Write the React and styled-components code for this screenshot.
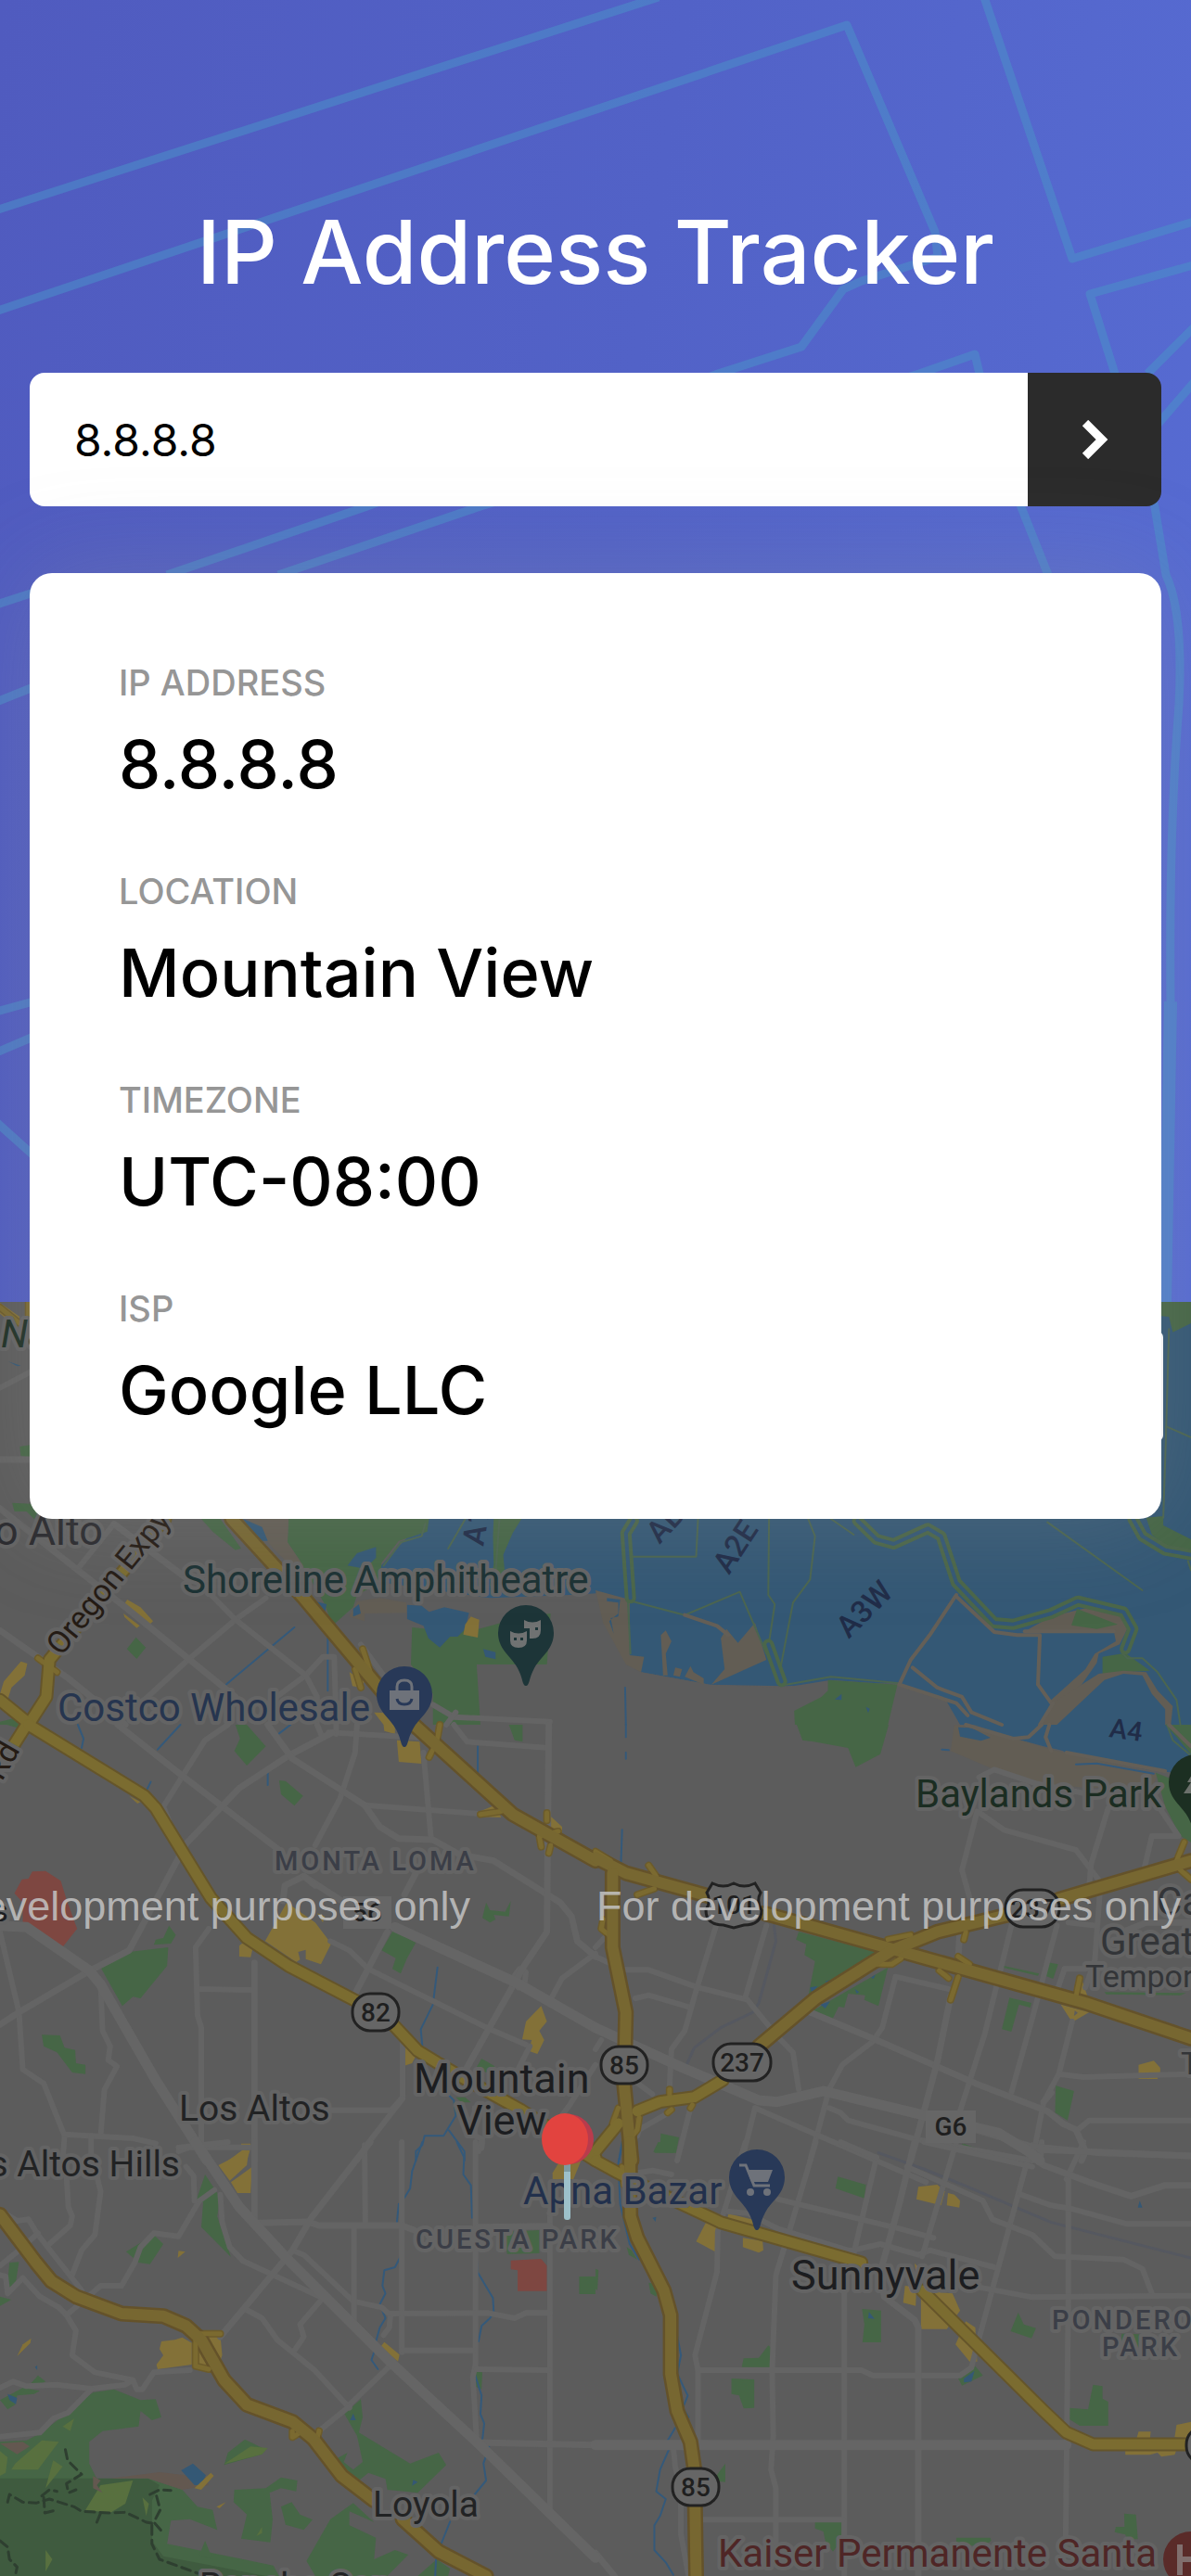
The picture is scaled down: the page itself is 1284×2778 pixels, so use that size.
import React, { useState } from "react";
import styled, { createGlobalStyle } from "styled-components";

const GlobalStyle = createGlobalStyle`
  *, *::before, *::after { box-sizing: border-box; }
  body {
    margin: 0;
    background: #5c5c5c;
    font-family: Inter, "Liberation Sans", sans-serif;
  }
`;

const Page = styled.div`
  min-height: 100vh;
  display: flex;
  flex-direction: column;
  overflow-x: hidden;
`;

const Header = styled.header`
  position: relative;
  z-index: 1;
  display: flex;
  flex-direction: column;
  padding: 212px 32px 0;
  background: linear-gradient(98deg, #505bbf 0%, #5262c7 50%, #576cd3 100%);
`;

const Pattern = styled.svg`
  position: absolute;
  inset: 0;
  width: 100%;
  height: 100%;
`;

const Title = styled.h1`
  position: relative;
  margin: 0 0 70px;
  color: #fff;
  font-size: 95px;
  font-weight: 500;
  line-height: 120px;
  text-align: center;
`;

const SearchForm = styled.form`
  position: relative;
  display: flex;
  height: 144px;
  margin-bottom: 72px;
  border-radius: 16px;
  overflow: hidden;
`;

const SearchInput = styled.input`
  flex: 1;
  min-width: 0;
  padding: 0 48px;
  border: 0;
  outline: 0;
  background: #fff;
  color: #000;
  font-family: inherit;
  font-size: 48px;
`;

const SearchButton = styled.button`
  display: flex;
  align-items: center;
  justify-content: center;
  width: 144px;
  padding: 0;
  border: 0;
  background: #2b2b2b;
  cursor: pointer;
`;

const Card = styled.dl`
  position: relative;
  display: flex;
  flex-direction: column;
  gap: 72px;
  margin: 0 0 -234px;
  padding: 96px;
  border-radius: 24px;
  background: #fff;
  box-shadow: 0 0 110px rgba(150, 150, 150, 0.25);
`;

const Entry = styled.div`
  display: flex;
  flex-direction: column;
  gap: 22px;
`;

const Label = styled.dt`
  color: #969696;
  font-size: 38px;
  font-weight: 500;
  line-height: 45px;
  text-transform: uppercase;
`;

const Value = styled.dd`
  margin: 0;
  color: #000;
  font-size: 72px;
  font-weight: 500;
  line-height: 86px;
`;

const MapPane = styled.main`
  position: relative;
  flex: 1;
  display: flex;
  min-height: 1374px;
`;

const MapDrawing = styled.svg`
  flex: 1;
  width: 100%;
  height: auto;
  background: #5c5c5c;
  font-family: Roboto, "Liberation Sans", sans-serif;
`;

const FullscreenButton = styled.button`
  position: absolute;
  top: 32px;
  right: 30px;
  width: 120px;
  height: 118px;
  border: 0;
  border-radius: 6px;
  background: #fff;
`;

const Place = styled.text`
  fill: ${(p) => p.$color || "#1c1d20"};
  font-size: ${(p) => p.$size || 42}px;
  font-style: ${(p) => (p.$italic ? "italic" : "normal")};
  stroke: #646464;
  stroke-width: 8px;
  stroke-linejoin: round;
  paint-order: stroke;
`;

const District = styled(Place)`
  fill: #3b3e47;
  font-size: 29px;
  font-weight: 500;
  letter-spacing: 3px;
`;

const PondName = styled.text`
  fill: #202c48;
  font-size: ${(p) => p.$size || 33}px;
  font-weight: 500;
`;

const ShieldText = styled.text`
  fill: #1f1f1f;
  font-size: 28px;
  font-weight: 500;
  text-anchor: middle;
`;

const Watermark = styled.text`
  fill: #c4c4c4;
  fill-opacity: 0.86;
  font-family: "Liberation Sans", Arial, sans-serif;
  font-size: 45px;
`;

const GREEN = "#466646";
const WATER = "#345875";
const SAND = "#625d54";
const SHOP = "#837138";
const RED = "#7e4741";
const FOREST = "#3f5b3f";
const OLIVE = "#58703f";

// The map is drawn in six tiles, each with a local 1568-wide grid.
const tiles = [
  {
    x: 0,
    y: 1390,
    areas: [
      [WATER, "1120,740 1570,740 1570,985 1500,990 1290,1000 1010,950 1000,900"],
      [GREEN, "760,740 1130,740 1125,785 1050,815 1005,885 1000,950 940,990 930,1030 875,1090 855,1020 790,880 757,820"],
      [GREEN, "1300,740 1375,740 1350,790 1325,860 1330,930 1360,990 1290,960 1300,890 1298,800"],
      [SAND, "650,740 760,740 757,820 790,880 800,940 720,840"],
      [WATER, "640,744 690,770 705,815 680,815"],
      [SAND, "940,1010 1000,1000 1070,1015 1070,1048 960,1050 960,1075 920,1060"],
      [WATER, "940,855 990,835 990,870 960,905 915,895"],
      [WATER, "830,1010 860,1020 855,1050 830,1040"],
      [WATER, "930,1035 945,1020 950,1050 930,1060"],
      [GREEN, "1085,1095 1130,1100 1260,1100 1380,1060 1450,1050 1440,1215 1255,1215 1265,1410 1140,1410 1140,1310 1082,1215"],
      [WATER, "1072,1022 1110,1025 1130,1045 1170,1030 1235,1048 1225,1100 1205,1125 1185,1125 1158,1160 1128,1130 1115,1090 1072,1068"],
      [WATER, "1272,1165 1305,1175 1305,1198 1278,1190"],
      [SHOP, "1240,1060 1262,1070 1258,1128 1220,1118 1225,1085"],
      [GREEN, "530,744 580,744 635,840 620,845 560,785"],
      [GREEN, "52,510 78,505 78,545 55,540"],
      [GREEN, "32,692 80,695 110,715 90,745 70,720 38,720"],
      [GREEN, "358,1127 384,1160 360,1197 334,1165"],
      [SHOP, "335,1005 370,1030 403,1075 390,1090 340,1042 322,1030"],
      [SHOP, "325,1050 368,1090 360,1097 328,1062"],
      [SHOP, "55,1205 72,1212 65,1250 30,1290 20,1330 0,1310 10,1270"],
      [SHOP, "30,1340 80,1380 80,1410 50,1410"],
      [SHOP, "0,45 52,90 45,125 0,80"],
      [WATER, "22,235 55,248 45,250"],
      [GREEN, "35,1390 50,1410 0,1410 0,1400"],
      [SHOP, "955,1155 975,1230 940,1220"],
      [SHOP, "920,1240 960,1270 950,1290 928,1285"],
      [SHOP, "985,1370 1020,1372 1035,1410 1010,1410"],
    ],
    thin: [
      "0,320 78,270", "205,905 300,760", "620,1070 700,1000", "495,1200 620,1070",
      "380,1330 495,1200", "690,1355 805,1250 850,1190 880,1190 885,1390", "540,970 620,1070 805,1250 835,1320 835,1400",
      "950,1150 1010,1250", "1140,1345 1195,1385 1448,1400", "1175,1410 1200,1370",
    ],
    streets: ["0,552 78,552", "0,710 205,910 330,1030 620,1320", "300,760 490,935", "0,1105 180,1260 330,1410"],
    streams: ["595,1280 775,1095", "863,1130 863,1300"],
    creeks: ["1120,760 1110,800 1055,820 1010,895", "1225,745 1180,840", "1315,745 1305,920 1320,970"],
    majors: ["435,744 395,800 360,860 130,1200 122,1320 80,1400", "0,1330 80,1410"],
    freeways: ["610,744 800,1000 1080,1410"],
    ramps: ["0,60 50,110", "75,40 75,90", "100,1195 150,1240", "955,1165 975,1240", "935,1230 950,1290"],
  },
  {
    x: 642,
    y: 1390,
    areas: [
      [WATER, "0,740 0,0 1570,0 1570,1410 950,1410 920,1330 795,1275 495,1285 300,1280 120,1240 60,1180 0,975"],
      [GREEN, "1490,40 1570,40 1570,110 1520,140 1510,90 1490,88"],
      ["#5c5c5c", "0,980 80,1210 120,1240 300,1280 495,1290 620,1265 795,1280 925,1335 960,1410 0,1410"],
      [SAND, "0,975 90,1005 90,1185 128,1190 120,1240 80,1215 20,1080"],
      [SAND, "330,1130 345,1100 375,1145 420,1080 450,1200 305,1280 340,1230"],
      [WATER, "30,1000 65,1005 60,1060 40,1065 48,1115 36,1075 60,1050 60,1015 30,1010"],
      [SAND, "185,1105 200,1140 185,1180 190,1250 178,1250 172,1120"],
      [SAND, "210,1225 228,1230 222,1255 205,1250"],
      [SAND, "250,1220 258,1240 285,1260 285,1280 235,1255"],
      [GREEN, "612,1265 795,1280 770,1410 525,1410 523,1365 595,1320 612,1300"],
      [WATER, "630,1328 648,1310 648,1330"],
      [WATER, "712,1352 722,1358 718,1372"],
      [SAND, "1130,1108 1200,1060 1300,1030 1390,1055 1400,1100 1380,1150 1325,1180 1320,1210 1280,1280 1210,1350 1195,1335 1290,1230 1315,1180 1370,1140 1365,1108"],
      [GREEN, "1268,1035 1375,1085 1320,1100 1253,1088"],
      [GREEN, "1335,1190 1395,1178 1460,1235 1390,1240 1335,1245"],
      [SAND, "1325,1245 1390,1235 1450,1240 1480,1300 1520,1350 1515,1410 1500,1410 1500,1360 1465,1310 1440,1250 1390,1245 1340,1265 1215,1410 1170,1410 1210,1335"],
      [GREEN, "1450,740 1495,735 1495,765 1568,810 1568,850 1500,830 1465,795"],
    ],
    thin: [],
    streets: [],
    streams: ["78,1290 80,1410"],
    creeks: [
      "1510,130 1503,440 1495,740", "1503,445 1568,480", "100,750 70,790 85,1000 92,1180", "95,866 265,866 270,744",
      "457,744 455,990 472,1020 455,1160 485,1240", "560,744 578,800 565,940 520,1015 485,1240", "1190,755 1440,975",
      "620,744 680,795", "100,1012 235,1055 380,980 450,1180", "495,1282 620,1255 795,1275",
      "1385,1175 1400,1195 1440,1195 1480,1240 1530,1330 1540,1410", "1560,880 1568,910",
    ],
    banks: [
      "690,750 740,810 785,825 875,775 910,800 950,950 1050,1080 1100,1085 1200,1050 1270,1010 1390,1045 1415,1100 1395,1165",
      "1415,744 1440,800 1500,845 1568,860", "100,750 80,790 92,1000", "455,1150 490,1270",
    ],
    dikes: [
      "235,1055 320,1090 350,1120", "950,990 880,1120 830,1200 800,1280", "950,995 1050,1110 1110,1120 1170,1120 1165,1280 1200,1340",
      "1130,1108 1365,1108", "835,1225 900,1290 965,1320 990,1370 1070,1410", "800,1280 950,1340 980,1380",
      "1205,1340 1185,1380 1170,1410",
    ],
    majors: [],
    freeways: [],
    ramps: [],
  },
  {
    x: 0,
    y: 1860,
    areas: [
      [GREEN, "620,0 650,0 700,70 650,132 617,85 632,45"],
      [GREEN, "735,180 752,182 798,230 775,262 740,225"],
      [GREEN, "1340,0 1376,0 1376,55 1355,50"],
      [RED, "85,475 120,473 160,505 175,565 203,660 162,724 60,640 60,575 38,545 58,500 75,498"],
      [GREEN, "265,785 340,735 443,720 440,780 370,885 350,880 322,910"],
      [GREEN, "445,650 463,680 450,708 405,712 410,695 430,690"],
      [SHOP, "755,575 830,640 872,708 845,775 805,758 805,728 785,735 790,760 780,768 698,700"],
      [SHOP, "835,610 855,620 850,640"],
      [SHOP, "640,705 668,710 660,752 630,750 630,715"],
      [GREEN, "1035,665 1095,705 1072,755 1055,805 1033,790 1042,755 1005,730"],
      [GREEN, "1280,575 1290,600 1330,605 1345,570 1340,620 1300,615 1305,630 1290,640 1270,625"],
      [SHOP, "1425,910 1440,960 1420,990 1433,1020 1415,1065 1392,1055 1400,1020 1375,1018 1385,960"],
      [GREEN, "110,1003 158,1005 170,1045 198,1052 200,1095 225,1100 225,1130 190,1125 150,1060 115,1040"],
      [SHOP, "1068,1040 1100,1060 1085,1095 1065,1103"],
      [GREEN, "1268,1080 1303,1105 1280,1125 1255,1108"],
      [GREEN, "1200,1205 1225,1205 1240,1222 1215,1222"],
      [SHOP, "1045,50 1105,55 1110,126 1050,120"],
      [SHOP, "1010,0 1040,0 1040,30 1012,20"],
      [SHOP, "340,230 370,250 362,255"],
      [SHOP, "600,1410 640,1375 658,1378 650,1410"],
      [SHOP, "1440,285 1480,330 1480,360 1430,330"],
      [SHOP, "1265,280 1300,262 1320,300 1262,298"],
      [GREEN, "18,0 55,0 45,10"],
    ],
    thin: [
      "600,0 540,50 430,265 445,310", "865,25 1110,42", "940,0 935,90 895,240 830,390", "960,260 1262,288",
      "1115,90 1135,370", "845,30 835,0", "885,0 885,30", "1195,0 1230,55 1445,75",
      "525,855 665,858", "870,1247 1030,1247 1060,1205 1060,1000", "265,840 270,990 290,1040 285,1085 308,1105 275,1180 265,1330",
      "0,670 50,930 60,1115 115,1160 170,1330 165,1410", "170,1325 350,1338 410,1355", "240,1330 240,1410",
      "470,1380 500,1367 665,1367", "1060,1210 965,1360 940,1410", "1250,1240 1250,1330 1270,1340 1260,1380",
      "1568,740 1480,820 1445,900", "1568,1100 1500,1230 1470,1280", "550,660 515,720 520,940 530,980 530,1380",
      "870,700 920,730 970,790 1290,985 1385,1035", "1365,850 1350,820 1368,790 1385,800 1380,850", "1395,1040 1350,1150",
    ],
    streets: [
      "310,0 480,165 740,410", "0,970 50,930 230,800 340,730 490,385 630,205 760,100 875,25", "705,0 770,110 960,260 1000,330 1050,368 1140,372 1210,420 1300,440 1475,575 1505,620 1520,700 1568,750",
      "1445,0 1440,670 1380,780 1220,1130", "1095,480 1065,550", "1020,670 935,870", "745,570 750,520 800,490 900,570",
      "670,770 670,1410", "800,490 830,520",
    ],
    avenues: ["0,650 70,655 235,795 265,840 410,1150 545,1410", "1040,655 1360,835 1568,980"],
    streams: [
      "205,0 220,45 215,75", "475,0 415,80", "397,185 385,215", "765,0 735,28", "1152,785 1140,905 1108,985 1112,1040",
      "1258,70 1258,155", "1155,1165 1195,1215 1200,1265 1168,1330 1118,1330 1112,1360 1095,1380 1095,1410", "1182,1312 1223,1380 1223,1410", "705,140 705,195",
    ],
    creeks: [],
    majors: ["70,0 35,68", "75,0 380,230 410,270 555,560 650,690 760,780 940,895", "1035,970 1100,1055 1160,1100", "1160,1100 1230,1150 1370,1245 1568,1400"],
    freeways: ["1090,0 1350,290 1568,440"],
    ramps: ["1158,0 1150,55 1130,105", "1440,285 1440,310", "1470,345 1420,360 1425,395", "1265,290 1320,280", "1445,415 1450,390"],
  },
  {
    x: 642,
    y: 1860,
    areas: [
      [WATER, "955,5 1010,0 1568,0 1568,160 1450,145 1180,70 1090,40 1010,20 1040,45 1020,50 960,35"],
      [SAND, "945,0 1010,10 1200,80 1480,160 1470,195 1300,205 1160,190 1060,150 935,85"],
      [WATER, "1180,0 1568,0 1568,165 1480,148 1240,90 1190,60"],
      [WATER, "955,8 990,10 1040,42 1015,52 960,38"],
      [GREEN, "1475,155 1568,200 1568,380 1540,360 1500,265"],
      [GREEN, "1500,0 1568,0 1568,95 1530,40"],
      [GREEN, "530,0 772,0 750,95 685,137 665,75 575,55 545,50"],
      [GREEN, "535,670 740,735 560,880 578,765 550,745 555,710 528,695"],
      [GREEN, "770,785 745,910 708,890 710,875 665,870 655,915 640,912 625,950 565,930"],
      [WATER, "565,850 585,845 570,870"],
      [WATER, "592,905 618,895 605,918"],
      [WATER, "605,830 620,825 612,842"],
      [WATER, "725,818 738,808 732,822"],
      [WATER, "683,855 694,865 688,870"],
      [GREEN, "1188,768 1218,775 1205,822 1180,810"],
      [GREEN, "1075,780 1168,805 1165,812 1072,785"],
      [GREEN, "1090,883 1148,900 1145,915 1115,905 1095,993 1070,985"],
      [SHOP, "1430,1100 1470,1087 1487,1110 1487,1130 1430,1130"],
      [SHOP, "1430,1140 1480,1140 1480,1146 1430,1146"],
      [GREEN, "1212,1168 1260,1185 1243,1280 1210,1255"],
      [GREEN, "172,1322 220,1335 212,1385 155,1385 170,1365"],
      [GREEN, "970,1355 1000,1370 970,1372"],
      [GREEN, "1340,865 1555,868 1540,875 1345,872"],
      [SHOP, "1278,815 1300,895 1258,880"],
      [SHOP, "1225,905 1300,930 1255,962"],
      ["#5c5c5c", "1262,925 1270,932 1260,942"],
    ],
    thin: [
      "1010,170 1050,145 1160,190 1300,225", "985,560 965,470 1005,280 1075,340 1265,405 1330,510", "1350,270 1305,450 1300,520",
      "1480,260 1535,360 1465,360 1445,465", "1330,510 1315,760 1290,850", "1245,640 1320,650", "105,885 140,875 250,915",
      "75,793 140,793 270,850 400,890 480,1010 520,1060 535,1180", "320,640 265,860 235,990 200,1050 195,1170",
      "450,650 395,880", "930,855 790,815 755,980 730,1025 650,1100 615,1180", "1095,650 1025,1000 960,1250", "1215,650 1150,950 1095,1190",
      "1255,960 1220,1130 1180,1220 1150,1410", "1220,1130 1285,1140 1568,1130", "1270,1310 1300,1280 1568,1280",
      "615,1180 600,1250 565,1410", "420,1240 385,1410", "250,1240 215,1410", "110,1330 115,1310 200,1250", "1235,790 1210,880", "1235,790 1290,790",
      "0,720 30,680", "0,750 75,793", "0,1050 15,1020", "100,1150 150,1195",
      "615,1240 645,1255 665,1280 840,1340 1150,1410", "420,1240 870,1480",
    ],
    streets: ["565,930 740,1020 1000,1160 1190,1250 1230,1290 1265,1310 1290,1380 1280,1410", "935,880 900,1090 830,1410", "960,650 955,760", "1390,670 1450,640 1568,640", "1000,1310 1150,1365 1330,1385 1568,1395", "1180,1220 1200,1190"],
    avenues: ["0,980 230,1110 430,1215 480,1220 600,1185 870,1265 1060,1320 1140,1380 1170,1410"],
    streams: ["80,0 80,40", "80,90 80,110", "70,340 66,480", "912,80 930,82", "1265,128 1320,125 1470,158", "72,1350 62,1410"],
    creeks: ["1505,0 1520,50 1568,100"],
    dikes: ["975,0 1100,45 1140,40 1175,0", "1195,0 1185,40 1200,85", "1240,90 1500,150", "1510,0 1568,70"],
    rails: ["470,650 475,700 430,900 415,930 330,980 260,1045 240,1100"],
    majors: ["110,1250 170,1220 260,1205 335,1150", "0,1380 60,1290"],
    freeways: [
      "0,430 80,480 300,555", "445,610 780,725 1290,900 1568,1015", "45,480 45,720 80,930 78,1040", "75,1160 95,1410",
      "430,1040 580,885 780,730 900,670 1085,615", "1220,565 1568,440",
    ],
    ramps: [
      "140,455 160,490", "110,550 155,530", "20,630 15,660 35,680", "0,410 40,440", "975,670 970,695", "955,750 985,775",
      "905,795 930,820", "955,815 935,890", "770,695 830,680", "740,775 780,775 805,755", "1550,380 1530,440", "1540,470 1568,500",
      "1275,820 1265,880", "60,1240 45,1290", "115,1270 110,1310 85,1350", "195,1180 195,1210", "200,1245 190,1255", "255,1230 250,1240",
    ],
  },
  {
    x: 0,
    y: 2310,
    areas: [
      [SHOP, "655,25 650,75 605,125 575,75"],
      [SHOP, "664,80 660,165 625,165 608,130"],
      [SHOP, "635,5 660,5 660,12 635,15"],
      [GREEN, "540,105 580,180 572,240 608,372 530,275 535,195 515,195"],
      [GREEN, "405,300 430,330 395,395 365,390 332,355"],
      [GREEN, "25,390 50,388 42,450 18,480"],
      [GREEN, "0,500 30,510 0,530"],
      [SHOP, "470,352 488,355 468,375"],
      [SHOP, "425,645 460,640 480,632 505,650 505,720 415,735 412,720 430,690 420,670"],
      [SHOP, "82,635 80,650 45,693 60,655"],
      [GREEN, "110,940 245,810 300,800 370,835 410,832 425,890 400,900 370,870 365,920 270,935 235,970 235,1040 255,1090 390,1088 480,1125 520,1180 560,1190 572,1255 500,1220 450,1225 440,1300 720,1370 735,1404 0,1404 0,970 70,965"],
      [FOREST, "0,1088 390,1088 420,1110 400,1160 400,1290 430,1340 700,1404 0,1404"],
      [OLIVE, "40,1040 110,965 155,970 100,1060 30,1060"],
      [OLIVE, "140,1030 165,1050 120,1120"],
      [OLIVE, "225,1190 265,1110 350,1095 330,1170 290,1200"],
      [OLIVE, "0,1000 20,1020 15,1070 0,1080"],
      [OLIVE, "375,1150 392,1170 385,1210"],
      [OLIVE, "120,1320 138,1350 120,1390"],
      [OLIVE, "165,920 195,895 185,935"],
      [OLIVE, "965,1290 980,1340 960,1340"],
      ["#635850", "0,975 60,970 78,985 45,1010"],
      ["#635850", "245,1080 265,1095 255,1110 270,1135 245,1120"],
      ["#635850", "290,1088 420,1068 540,1085 550,1110 480,1125 390,1088"],
      [GREEN, "0,835 60,795 105,805 90,815 45,820 40,850 20,865"],
      [GREEN, "100,755 120,775 100,790 82,780"],
      [WATER, "20,815 45,828 42,848 25,835"],
      [WATER, "92,728 98,722 98,738"],
      [GREEN, "645,962 700,995 690,1010 590,1045 600,1005"],
      [OLIVE, "660,985 705,990 690,1010 590,1042"],
      [WATER, "508,1040 542,1078 530,1110 512,1110 477,1062"],
      [SHOP, "555,1070 563,1080 530,1125 512,1120"],
      [GREEN, "740,1085 783,1095 780,1130 740,1120 710,1135 718,1220 712,1295 635,1283 650,1205 615,1165 617,1125 700,1120"],
      [GREEN, "768,1165 790,1205 823,1222 800,1255 752,1238 740,1180"],
      [GREEN, "930,1168 985,1230 920,1195 920,1240 990,1280 985,1350 1040,1320 1075,1335 1020,1404 830,1404 807,1355 870,1220"],
      [GREEN, "950,832 955,890 945,940 1080,1040 1155,1005 1175,1045 1100,1135 1020,1125 1015,1090 970,1070 940,1100 890,1040 885,1025 915,1005 905,1035 930,1060 955,1035 940,950 907,880"],
      [WATER, "930,878 937,900 922,900"],
      [WATER, "1088,1093 1100,1100 1085,1112"],
      [GREEN, "1250,740 1270,745 1268,800 1250,790"],
      [GREEN, "1330,290 1420,285 1420,360 1335,362"],
      [RED, "1345,383 1425,378 1440,400 1440,482 1363,482 1363,415 1345,412"],
      [GREEN, "1525,435 1568,435 1568,492 1525,492"],
      [SHOP, "1012,647 1052,688 1048,710 1002,662"],
      [SHOP, "1455,100 1475,60 1530,60 1510,120 1455,122"],
      [SHOP, "520,610 580,625 585,690 570,740 510,735 505,650"],
      [GREEN, "1150,1350 1185,1380 1180,1404 1100,1404"],
      [SHOP, "570,1180 595,1165 578,1185"],
      [OLIVE, "675,1275 690,1245 690,1265"],
      [GREEN, "540,1290 560,1350 525,1335"],
    ],
    thin: [
      "175,110 180,210 190,240 185,270 130,330", "255,110 265,160 250,300 215,350 190,430", "0,220 45,255 75,250 100,300 215,480",
      "100,295 60,340 0,400", "60,440 20,490 15,435 0,430", "60,440 105,500 155,535 175,560 200,610 190,690 250,745 350,770",
      "175,560 265,465 320,465 355,390 370,340 405,295 470,305 525,190 565,155", "490,80 510,110 512,190", "600,0 470,18",
      "0,795 35,775 70,790 150,785 240,798 330,785 350,770 360,800 375,800 405,745 500,738", "240,800 180,875 140,895 105,940 0,953",
      "580,170 585,260 605,340 640,385 850,505 790,590 800,630 775,675", "770,350 800,365 930,515 1005,535 1028,560 1025,600 1010,625",
      "932,270 932,580", "1058,0 1058,680", "960,10 962,265", "1252,0 1252,720 1245,760 1255,960", "1448,230 1448,1190",
      "1028,555 1285,553 1355,570 1385,553 1448,553", "1058,674 1250,674", "1255,735 1445,738", "645,540 690,570 730,640 830,740 920,860",
      "920,850 1030,720", "840,935 920,855", "1270,0 1268,20",
    ],
    streets: ["670,0 670,265", "675,262 810,258 840,270 1058,270 1090,285", "1258,275 1448,272", "975,0 820,245 770,350 580,630", "1255,972 1568,980", "1448,230 1460,200"],
    avenues: ["515,0 630,210 750,370 1035,720 1255,970 1568,1345"],
    streams: [
      "1112,0 1085,95 1080,150 1065,180", "1050,200 1045,260", "1053,280 1053,275", "1203,0 1222,50 1220,105 1240,140 1243,245",
      "1055,370 1040,405 1012,415 1007,465 1015,490 1000,525 1015,570 1000,600 990,645", "985,680 978,705 995,735",
      "1255,365 1257,420 1298,505 1300,550 1290,570 1268,595 1260,645", "1250,750 1268,820 1265,880 1275,910 1270,965", "1288,985 1273,1040 1280,1095 1250,1140",
      "1185,1228 1160,1305 1148,1350 1146,1404",
    ],
    creeks: [],
    trails: [
      "172,995 178,1030 215,1075 175,1105 180,1135 200,1125", "20,1165 25,1140 60,1165 95,1168 130,1155 195,1180 215,1195 290,1200 330,1198 385,1230 410,1235",
      "395,1140 420,1125 450,1127", "412,1145 422,1190 405,1230 430,1265", "400,1240 400,1300 420,1350 520,1395", "110,1145 130,1125 150,1130",
      "0,1290 20,1310 25,1350 45,1375 40,1404", "255,1230 265,1200", "115,1150 118,1200 150,1190",
    ],
    majors: ["1490,0 1568,60"],
    freeways: ["0,235 95,390 135,450 200,500 320,555 430,563 490,595 530,640 590,770 650,850 770,905 825,960 900,1080 985,1160", "1060,1220 1155,1325 1280,1404"],
    ramps: ["770,935 770,955 790,940", "840,935 835,960", "515,640 515,725 550,735", "580,620 520,620"],
  },
  {
    x: 642,
    y: 2310,
    areas: [
      [GREEN, "638,112 712,138 708,182 632,150"],
      [SHOP, "850,145 900,138 920,160 910,205 845,185"],
      [SHOP, "928,165 945,170 960,190 958,212 925,205"],
      [SHOP, "890,125 925,135 925,148"],
      [SHOP, "350,232 410,250 440,280 430,300 345,260"],
      [SHOP, "290,262 325,275 315,355 265,322"],
      [SHOP, "388,310 440,320 442,350 430,358 388,340"],
      [GREEN, "165,0 215,0 205,35 152,32"],
      [GREEN, "965,5 1000,18 968,18"],
      [GREEN, "0,410 8,415 5,480 0,475"],
      [GREEN, "140,455 165,460 160,500 145,490"],
      [GREEN, "702,540 752,545 752,648 703,648 708,590"],
      [WATER, "720,550 735,572 718,570"],
      [SHOP, "815,465 845,470 843,530 810,520"],
      [SHOP, "840,392 855,410 845,430"],
      [SHOP, "857,480 940,490 960,545 925,605 857,605"],
      [SHOP, "975,580 1000,600 1005,710 985,710 948,655"],
      [GREEN, "1113,552 1128,590 1160,602 1148,635 1093,612"],
      [GREEN, "455,658 462,665 462,728 385,728 390,700 430,698"],
      [GREEN, "358,765 418,768 418,860 390,862 378,820 358,815"],
      [GREEN, "955,765 1000,725 1020,755 965,788"],
      [WATER, "970,765 998,740 990,775 970,778"],
      [GREEN, "1310,785 1335,790 1335,830 1350,840 1350,918 1275,918 1245,895 1247,860 1297,865"],
      [SHOP, "1430,937 1462,937 1460,960 1425,958"],
      [SHOP, "1395,995 1530,995 1525,1012 1490,1018 1480,1005 1460,1012 1395,1012"],
      [SHOP, "1530,915 1568,905 1568,958 1525,955"],
      [GREEN, "578,1230 648,1230 648,1290 625,1325 605,1290 600,1260 578,1250"],
      [GREEN, "318,1080 342,1040 342,1100 325,1098"],
      [GREEN, "950,1280 1040,1280 1042,1290 1020,1310 950,1300"],
      [GREEN, "1392,1202 1423,1205 1428,1285 1400,1285 1395,1270 1367,1262 1370,1245 1393,1245"],
      [GREEN, "1385,620 1432,622 1430,665 1385,665"],
      [WATER, "1433,190 1440,212 1428,212"],
      [WATER, "150,245 160,242 158,258"],
      [GREEN, "82,340 95,350 110,380 88,365"],
    ],
    thin: [
      "395,0 370,100 322,290 320,420 262,690 270,740 270,970", "580,0 510,290 475,430 465,740 468,950 462,1060 475,1120 475,1300",
      "740,50 680,360", "480,185 800,280 890,310", "110,100 150,92 200,105", "350,225 400,230 480,280 670,352 750,330 850,365 880,350 1050,405",
      "270,738 700,738 730,755 960,755 990,730 1000,680 1135,70 1150,10", "655,480 655,1404", "280,1222 650,1222", "1240,120 1285,0", "1245,120 1245,500 1238,1280",
      "950,0 860,370", "645,0 740,50", "820,80 1020,190 1045,250 1150,300 1210,370 1390,380 1440,410 1465,490", "1010,470 1150,502 1568,497", "1120,170 1200,205 1250,215 1400,265 1568,265",
      "1175,0 1172,60", "865,0 1150,80", "205,990 210,1050 225,1130 225,1270 245,1404",
    ],
    streets: ["840,0 800,200 750,420 760,500 840,575 850,600 850,1404", "1100,0 1180,75 1300,130 1410,175 1500,140 1568,140", "0,1330 50,1404", "1170,25 1568,45"],
    avenues: ["0,980 1240,980"],
    streams: ["70,0 60,70 65,200 90,330 115,380", "215,625 225,690 215,750 243,820 230,860 245,890", "210,925 188,970", "195,990 170,1060 160,1130 185,1155 170,1210 155,1240 155,1320 185,1360 205,1400"],
    creeks: [],
    rails: ["745,35 870,90 980,145 1200,260 1568,375"],
    majors: ["0,60 60,100 140,150 330,260 700,390", "860,480 1180,870 1240,940 1310,978 1568,978"],
    freeways: ["90,0 92,240 110,310 180,480 198,560 198,750 215,870 250,970 260,1055", "262,1175 265,1404"],
    ramps: ["20,0 0,50", "70,80 75,140 95,155"],
  },
];

const layers = [
  { key: "streams", stroke: "#34597a", width: 2 },
  { key: "creeks", stroke: "#4b6550", width: 2 },
  { key: "banks", stroke: "#4b6649", width: 12 },
  { key: "banks", stroke: WATER, width: 4 },
  { key: "dikes", stroke: "#645f57", width: 4 },
  { key: "rails", stroke: "#555860", width: 3 },
  { key: "thin", stroke: "#646464", width: 6 },
  { key: "streets", stroke: "#646464", width: 7 },
  { key: "avenues", stroke: "#656565", width: 11 },
  { key: "ramps", stroke: "#6c5b2b", width: 8 },
  { key: "majors", stroke: "#65552a", width: 15 },
  { key: "freeways", stroke: "#64522a", width: 17 },
  { key: "ramps", stroke: "#7b6a30", width: 5 },
  { key: "majors", stroke: "#7b6c30", width: 11 },
  { key: "freeways", stroke: "#776731", width: 12 },
  { key: "trails", stroke: "#2e3f30", width: 3, dash: "10 6" },
];

const tileTransform = (tile) => `translate(${tile.x} ${tile.y}) scale(0.40944 0.33333)`;

function Terrain() {
  return (
    <g fill="none" strokeLinejoin="round" strokeLinecap="round">
      {tiles.map((tile) => (
        <g key={`${tile.x}-${tile.y}`} transform={tileTransform(tile)}>
          {tile.areas.map(([fill, points]) => (
            <polygon key={points} fill={fill} points={points} />
          ))}
        </g>
      ))}
      {layers.map((layer, i) => (
        <g key={i} stroke={layer.stroke} strokeWidth={layer.width} strokeDasharray={layer.dash}>
          {tiles.map((tile) => (
            <g key={`${tile.x}-${tile.y}`} transform={tileTransform(tile)}>
              {(tile[layer.key] || []).map((points) => (
                <polyline key={points} points={points} vectorEffect="non-scaling-stroke" />
              ))}
            </g>
          ))}
        </g>
      ))}
    </g>
  );
}

function Shield({ x, y, width = 50, children }) {
  return (
    <g>
      <rect x={x - width / 2} y={y - 20} width={width} height={40} rx={19} fill="#666" stroke="#222" strokeWidth={3} />
      <ShieldText x={x} y={y + 10}>{children}</ShieldText>
    </g>
  );
}

function PoiPin({ x, y, color, children }) {
  return (
    <g transform={`translate(${x} ${y})`}>
      <path d="M0 57C-4 57-3 49-9 38C-16 25-30 18-30 0A30 30 0 0 1 30 0C30 18 16 25 9 38C3 49 4 57 0 57Z" fill={color} />
      {children}
    </g>
  );
}

function AreaMap() {
  return (
    <MapDrawing viewBox="0 1404 1284 1374" preserveAspectRatio="xMidYMin slice" role="img" aria-label="Map of Mountain View">
      <Terrain />

      <PondName x={521} y={1668} transform="rotate(-80 521 1668)">A1</PondName>
      <PondName x={711} y={1666} transform="rotate(-47 711 1666)">AB</PondName>
      <PondName x={786} y={1699} transform="rotate(-57 786 1699)">A2E</PondName>
      <PondName x={915} y={1768} transform="rotate(-45 915 1768)">A3W</PondName>
      <PondName x={1195} y={1873} transform="rotate(8 1195 1873)" $size={29}>A4</PondName>

      <rect x={370} y={2045} width={52} height={35} fill="#666" />
      <ShieldText x={396} y={2072}>56</ShieldText>
      <rect x={998} y={2276} width={54} height={35} fill="#666" />
      <ShieldText x={1025} y={2303}>G6</ShieldText>
      <Shield x={405} y={2170}>82</Shield>
      <Shield x={673} y={2227}>85</Shield>
      <Shield x={800} y={2224} width={62}>237</Shield>
      <Shield x={1113} y={2058} width={58}>237</Shield>
      <Shield x={750} y={2682}>85</Shield>
      <Shield x={1304} y={2637}>82</Shield>
      <path
        d="M768 2031Q780 2037 791 2031Q802 2037 814 2031L820 2041Q815 2050 821 2060Q821 2076 802 2076L791 2079L780 2076Q761 2076 761 2060Q767 2050 762 2041Z"
        fill="#666" stroke="#222" strokeWidth={3}
      />
      <ShieldText x={791} y={2064}>101</ShieldText>

      <Place x={1} y={1453} $color="#1d2f24" $italic>Na</Place>
      <Place x={111} y={1666} $color="#2b2b2f" $size={45} textAnchor="end">Palo Alto</Place>
      <Place x={66} y={1787} $color="#241b14" $size={34} transform="rotate(-51 66 1787)">Oregon Expy</Place>
      <Place x={22} y={1887} $color="#241b14" $size={34} textAnchor="end" transform="rotate(-60 22 1887)">Rd</Place>
      <Place x={0} y={2072} $size={34} textAnchor="middle">s</Place>
      <Place x={197} y={1718} $color="#1b3133">Shoreline Amphitheatre</Place>
      <Place x={62} y={1856} $color="#26354f">Costco Wholesale</Place>
      <Place x={987} y={1949} $color="#1b2d22">Baylands Park</Place>
      <Place x={1247} y={2065} $color="#333538">Ca</Place>
      <Place x={1186} y={2108} $color="#333538">Great</Place>
      <Place x={1170} y={2143} $color="#333538" $size={34}>Tempor</Place>
      <Place x={1273} y={2237} $color="#333538" $size={34}>T</Place>
      <Place x={446} y={2257} $size={45}>Mountain</Place>
      <Place x={492} y={2302} $size={45}>View</Place>
      <Place x={193} y={2287} $size={39} $color="#222324">Los Altos</Place>
      <Place x={194} y={2347} $size={39} $color="#222324" textAnchor="end">Los Altos Hills</Place>
      <Place x={402} y={2714} $size={39} $color="#222324">Loyola</Place>
      <Place x={215} y={2802} $size={39} $color="#222324">Rancho San</Place>
      <Place x={853} y={2469} $size={45}>Sunnyvale</Place>
      <Place x={564} y={2377} $color="#22304c">Apna Bazar</Place>
      <Place x={774} y={2768} $color="#4f2626">Kaiser Permanente Santa</Place>
      <District x={296} y={2017}>MONTA LOMA</District>
      <District x={448} y={2425}>CUESTA PARK</District>
      <District x={1134} y={2512}>PONDERO</District>
      <District x={1188} y={2541}>PARK</District>

      <PoiPin x={567} y={1761} color="#1d3538">
        <path d="M-17-2Q-8 3 1-2V8Q1 16-8 16Q-17 16-17 8ZM-2-14Q7-9 16-14V-3Q16 6 7 6H4V-5H-2Z" fill="#707272" />
        <path d="M-13 5h3v3h-3zM-6 5h3v3h-3zM10-6h3v3h-3z" fill="#1d3538" />
      </PoiPin>
      <PoiPin x={436} y={1827} color="#283958">
        <path d="M-16-4H16V17H-16Z" fill="#6e727a" />
        <path d="M-8-4V-8Q-8-15 0-15Q8-15 8-8V-4" fill="none" stroke="#6e727a" strokeWidth={3} />
        <path d="M-8 5Q-7 11 0 11Q7 11 8 5" fill="none" stroke="#283958" strokeWidth={3} />
      </PoiPin>
      <PoiPin x={816} y={2348} color="#283958">
        <path d="M-19-13H-12L-3 9H14" fill="none" stroke="#6e727a" strokeWidth={3} />
        <path d="M-11-8H17L12 5H-6Z" fill="#6e727a" />
        <circle cx={-7} cy={16} r={4} fill="#6e727a" />
        <circle cx={11} cy={16} r={4} fill="#6e727a" />
      </PoiPin>
      <PoiPin x={1290} y={1922} color="#1c2f22">
        <path d="M-14 12L-6 0H-10L0-16V12Z" fill="#6c716c" />
      </PoiPin>
      <circle cx={1284} cy={2760} r={30} fill="#5a2b29" />
      <path d="M1272 2744V2777M1292 2744V2777M1272 2760H1292" stroke="#806f6e" strokeWidth={6} />

      <Watermark x={507} y={2071} textAnchor="end">For development purposes only</Watermark>
      <Watermark x={643} y={2071}>For development purposes only</Watermark>

      <rect x={608} y={2330} width={7} height={64} rx={3} fill="#9dc1ca" />
      <rect x={608} y={2330} width={7} height={12} fill="#7e9ba1" />
      <circle cx={613} cy={2307} r={27} fill="#b93b4c" />
      <ellipse cx={609} cy={2307} rx={25} ry={28} fill="#e2433f" />
    </MapDrawing>
  );
}

function HeaderPattern() {
  return (
    <Pattern viewBox="0 0 1284 1404" preserveAspectRatio="none" aria-hidden="true">
      <g fill="none" stroke="#4a90c8" strokeOpacity={0.55} strokeWidth={9} strokeLinejoin="round">
        <path d="M-5 227L710-3" />
        <path d="M-5 336L913 27L1008 250L1011 277L929 303L909 312L864 374L774 403L393 547L180 620" />
        <path d="M300 620L515 547L991 403L1051 382L1056 403L1101 547L1130 620" />
        <path d="M1061-3L1156 279L1290 238" />
        <path d="M1290 285L1175 317L1202 403L1245 547L1257 620Q1276 660 1271 760Q1260 900 1262 1080" />
        <path d="M1290 350L1237 403M1290 409L1246 460" />
        <path d="M-4 652L36 639M-4 757L36 741M-4 1091L36 1080M-4 1135L36 1118M-4 1210L36 1246" />
        <path d="M1262 1080L1256 1404" strokeWidth={14} />
      </g>
    </Pattern>
  );
}

const details = [
  ["IP Address", "8.8.8.8"],
  ["Location", "Mountain View"],
  ["Timezone", "UTC-08:00"],
  ["ISP", "Google LLC"],
];

export default function App() {
  const [query, setQuery] = useState("8.8.8.8");
  return (
    <Page>
      <GlobalStyle />
      <Header>
        <HeaderPattern />
        <Title>IP Address Tracker</Title>
        <SearchForm onSubmit={(e) => e.preventDefault()}>
          <SearchInput aria-label="IP address or domain" value={query} onChange={(e) => setQuery(e.target.value)} />
          <SearchButton type="submit" aria-label="Search">
            <svg width="33" height="42" viewBox="0 0 11 14" aria-hidden="true">
              <path d="M2 1l6 6-6 6" fill="none" stroke="#fff" strokeWidth="3" />
            </svg>
          </SearchButton>
        </SearchForm>
        <Card>
          {details.map(([label, value]) => (
            <Entry key={label}>
              <Label>{label}</Label>
              <Value>{value}</Value>
            </Entry>
          ))}
        </Card>
      </Header>
      <MapPane>
        <AreaMap />
        <FullscreenButton type="button" aria-label="Toggle fullscreen view" />
      </MapPane>
    </Page>
  );
}
